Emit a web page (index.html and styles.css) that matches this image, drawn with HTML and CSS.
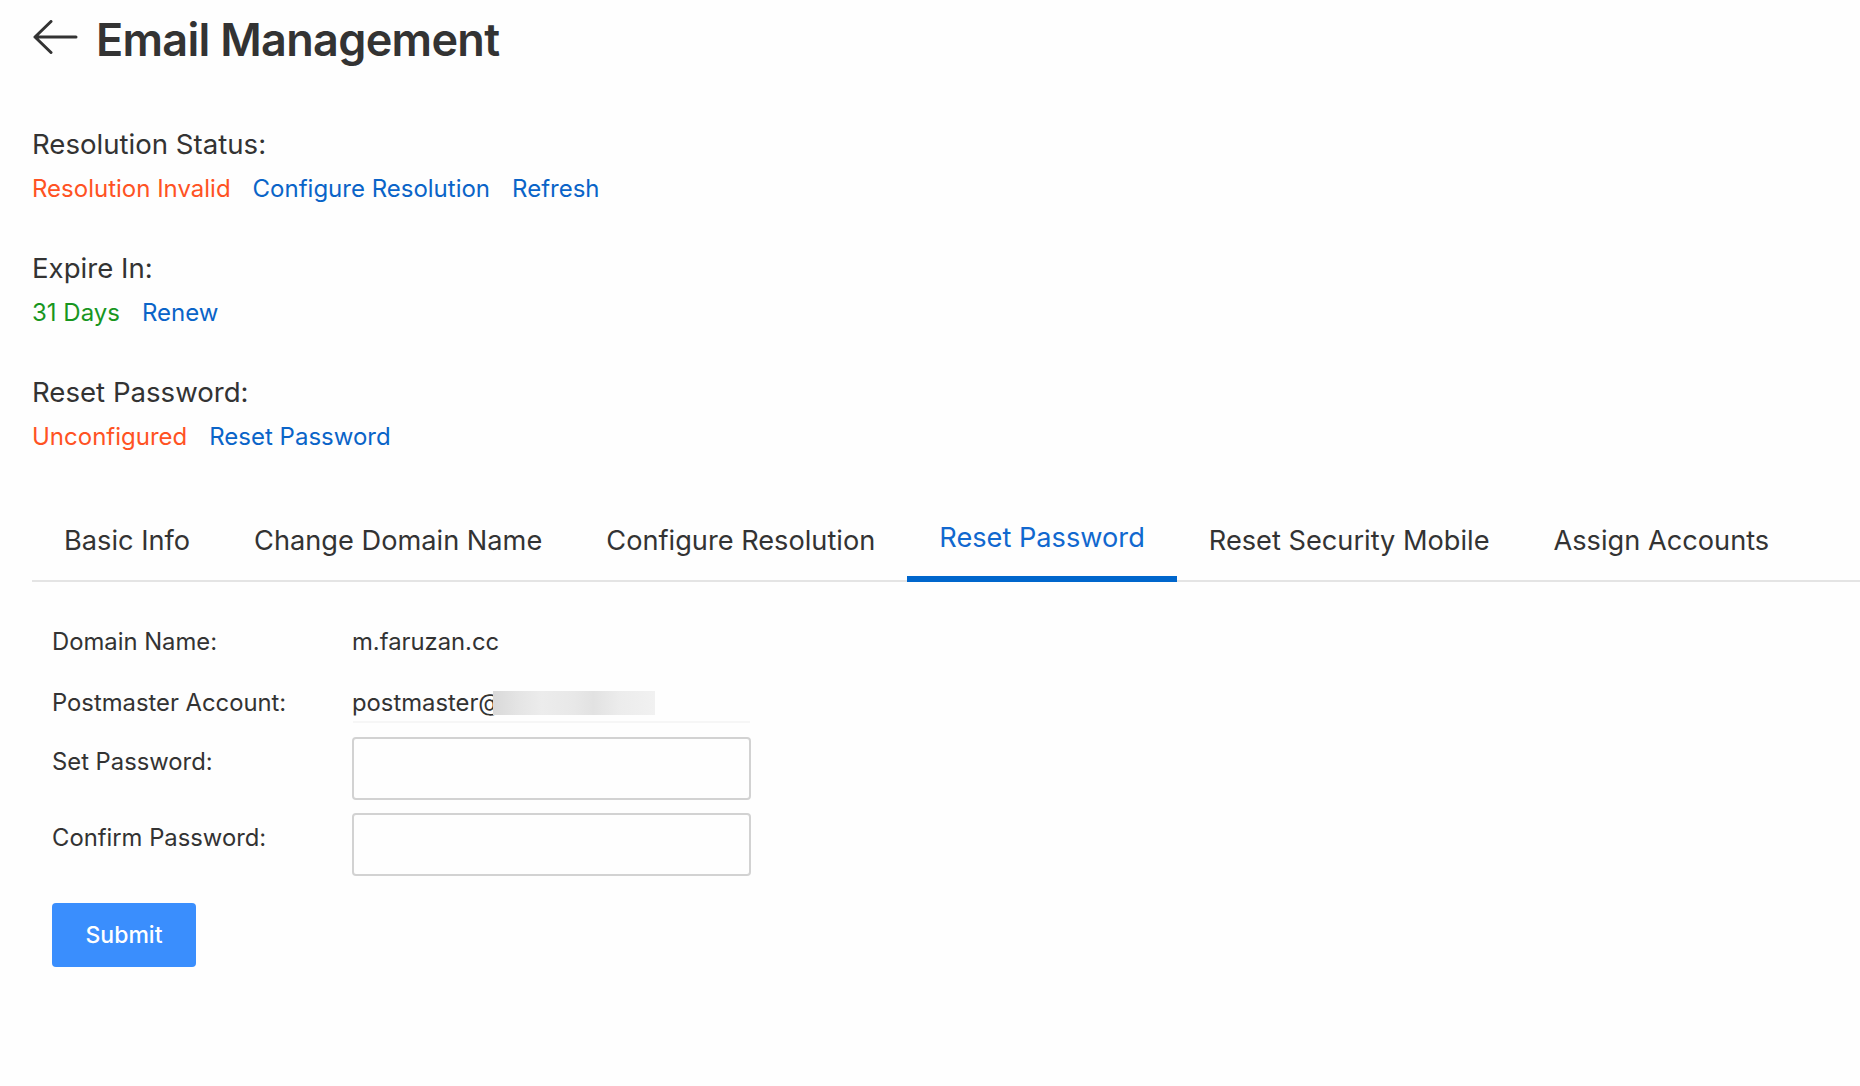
FILE: index.html
```html
<!DOCTYPE html>
<html lang="en">
<head>
  <meta charset="UTF-8">
  <meta name="viewport" content="width=device-width, initial-scale=1.0">
  <title>Email Management</title>
  <link rel="stylesheet" href="styles.css">
</head>
<body>
  <div class="page">
    <!-- Header -->
    <div class="header">
      <svg class="back" width="46" height="34" viewBox="0 0 46 34">
        <path d="M44 17 H3 M19 1.5 L3 17 L19 32.5" fill="none" stroke="#333" stroke-width="3" stroke-linecap="round" stroke-linejoin="round"/>
      </svg>
      <h1>Email Management</h1>
    </div>

    <!-- Status blocks -->
    <div class="status status-first">
      <div class="status-label">Resolution Status:</div>
      <div class="status-links">
        <span class="red">Resolution Invalid</span>
        <a href="#">Configure Resolution</a>
        <a href="#">Refresh</a>
      </div>
    </div>

    <div class="status">
      <div class="status-label">Expire In:</div>
      <div class="status-links">
        <span class="green">31 Days</span>
        <a href="#">Renew</a>
      </div>
    </div>

    <div class="status">
      <div class="status-label">Reset Password:</div>
      <div class="status-links">
        <span class="red">Unconfigured</span>
        <a href="#">Reset Password</a>
      </div>
    </div>

    <!-- Tabs -->
    <div class="tabs">
      <div class="tab">Basic Info</div>
      <div class="tab">Change Domain Name</div>
      <div class="tab">Configure Resolution</div>
      <div class="tab active">Reset Password</div>
      <div class="tab">Reset Security Mobile</div>
      <div class="tab">Assign Accounts</div>
    </div>

    <!-- Reset password form -->
    <div class="form">
      <div class="row row-domain">
        <div class="label">Domain Name:</div>
        <div class="value">m.faruzan.cc</div>
      </div>
      <div class="row row-account">
        <div class="label">Postmaster Account:</div>
        <div class="value account">postmaster@<span class="masked"></span></div>
      </div>
      <div class="row row-input">
        <div class="label">Set Password:</div>
        <input type="password" class="field">
      </div>
      <div class="row row-input row-confirm">
        <div class="label">Confirm Password:</div>
        <input type="password" class="field">
      </div>
      <button class="submit">Submit</button>
    </div>
  </div>
</body>
</html>
```

FILE: styles.css
```css
/* Base */
body {
  margin: 0;
  background: #fefefe;
  color: #333;
  font-family: 'Inter', 'Liberation Sans', sans-serif;
}

.page {
  padding-left: 32px;
}

/* Header */
.header {
  display: flex;
  align-items: center;
  height: 78px;
  gap: 18px;
}

.back {
  margin-bottom: 4px;
}

h1 {
  margin: 0;
  font-size: 45px;
  line-height: 1;
  font-weight: 600;
  color: #333;
  letter-spacing: -0.7px;
}

/* Status blocks */
.status {
  margin-top: 43px;
}

.status-first {
  margin-top: 48px;
}

.status-label {
  font-size: 27.6px;
  line-height: 36px;
}

.status-links {
  margin-top: 9px;
  display: flex;
  gap: 22px;
  font-size: 24px;
  line-height: 36px;
}

.status-links a {
  color: #0a64c8;
  text-decoration: none;
}

.red {
  color: #ff5223;
}

.green {
  color: #18961f;
}

/* Tabs */
.tabs {
  margin-top: 65px;
  display: flex;
  align-items: flex-end;
  border-bottom: 2px solid #e4e4e4;
}

.tab {
  position: relative;
  padding: 0 32px 21px;
  font-size: 27.2px;
  line-height: 36px;
  color: #333;
  cursor: pointer;
}

.tab.active {
  padding-bottom: 24px;
  color: #1168cf;
}

.tab.active::after {
  content: '';
  position: absolute;
  left: 0;
  right: 0;
  bottom: -2px;
  height: 6px;
  background: #0066cc;
}

/* Form */
.form {
  padding-left: 20px;
  margin-top: 42px;
  font-size: 23.8px;
}

.row {
  display: flex;
  align-items: flex-start;
  line-height: 36px;
}

.label {
  width: 300px;
  flex-shrink: 0;
}

.row-account {
  margin-top: 25px;
}

.account {
  display: flex;
  align-items: center;
  width: 399px;
  box-shadow: 0 3px 0 -1px #f6f6f6;
}

.masked {
  display: inline-block;
  width: 162px;
  height: 24px;
  margin-left: -8px;
  background: linear-gradient(90deg, #d9d9d9 0, #e4e4e4 15%, #ececec 30%, #e8e8e8 50%, #e2e2e2 62%, #ececec 78%, #f1f1f1 100%);
}

.row-input {
  margin-top: 16px;
}

.row-input .label {
  padding-top: 7px;
}

.row-confirm {
  margin-top: 13px;
}

.field {
  box-sizing: border-box;
  width: 399px;
  height: 63px;
  border: 2px solid #d2d2d2;
  border-radius: 4px;
  background: #fefefe;
  outline: none;
}

.submit {
  margin-top: 27px;
  width: 144px;
  height: 64px;
  background-color: #3a8efd;
  color: white;
  border: none;
  border-radius: 4px;
  font-family: inherit;
  font-size: 23px;
  font-weight: 500;
  cursor: pointer;
}
```
